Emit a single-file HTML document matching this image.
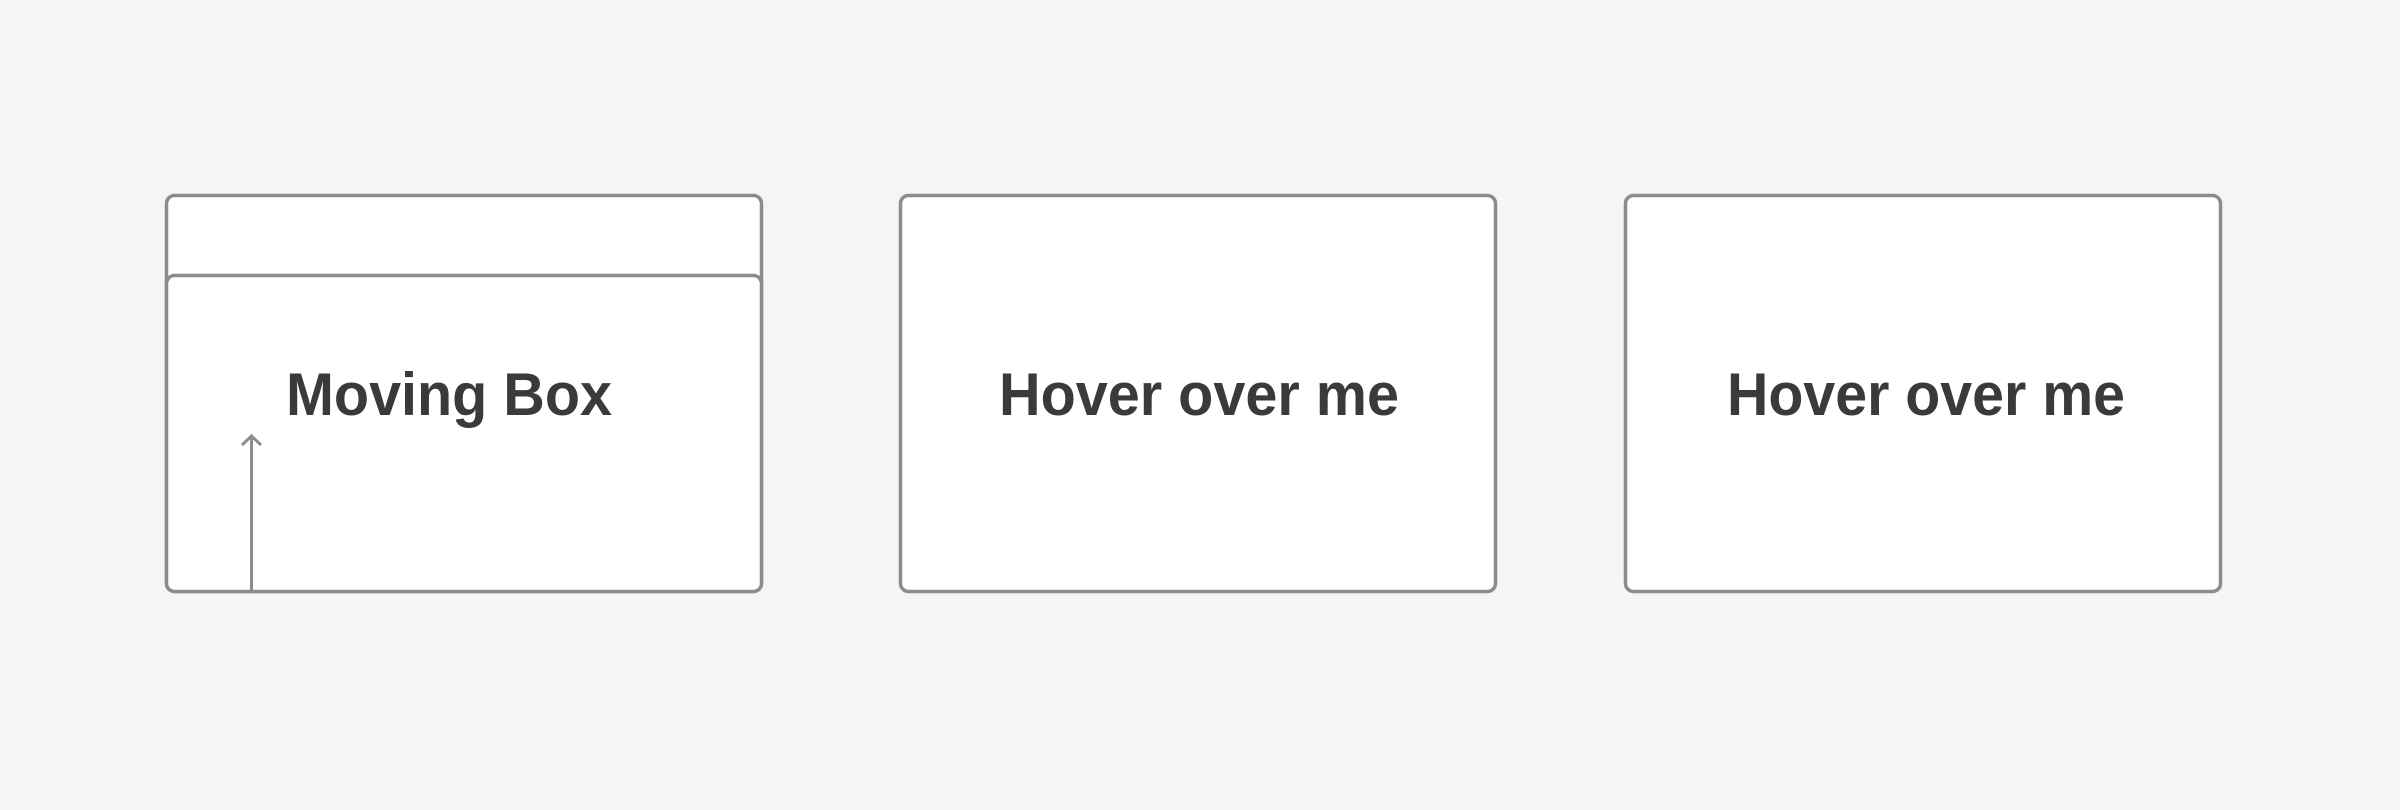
<!DOCTYPE html>
<html><head><meta charset="utf-8"><style>
html,body{margin:0;padding:0;background:#f5f5f5;width:2400px;height:810px;overflow:hidden}
svg{position:absolute;left:0;top:0}
</style></head><body>
<svg width="2400" height="810" viewBox="0 0 2400 810">
<g fill="#fff" stroke="#8c8c8c" stroke-width="3.5">
<rect x="166.5" y="195.5" width="595" height="396" rx="8"/>
<rect x="166.5" y="275.5" width="595" height="316" rx="8"/>
<rect x="900.5" y="195.5" width="595" height="396" rx="8"/>
<rect x="1625.5" y="195.5" width="595" height="396" rx="8"/>
</g>
<g stroke="#8c8c8c" stroke-width="3" fill="none">
<line x1="251.5" y1="437" x2="251.5" y2="591"/>
<polyline points="242,445 251.5,436 261,445"/>
</g>
<g fill="#3a3a3a" font-family="Liberation Sans, sans-serif" font-weight="bold" font-size="60">
<text x="286" y="415" textLength="326" lengthAdjust="spacingAndGlyphs">Moving Box</text>
<text x="999" y="415" textLength="400" lengthAdjust="spacingAndGlyphs">Hover over me</text>
<text x="1727" y="415" textLength="398" lengthAdjust="spacingAndGlyphs">Hover over me</text>
</g>
</svg>
</body></html>
